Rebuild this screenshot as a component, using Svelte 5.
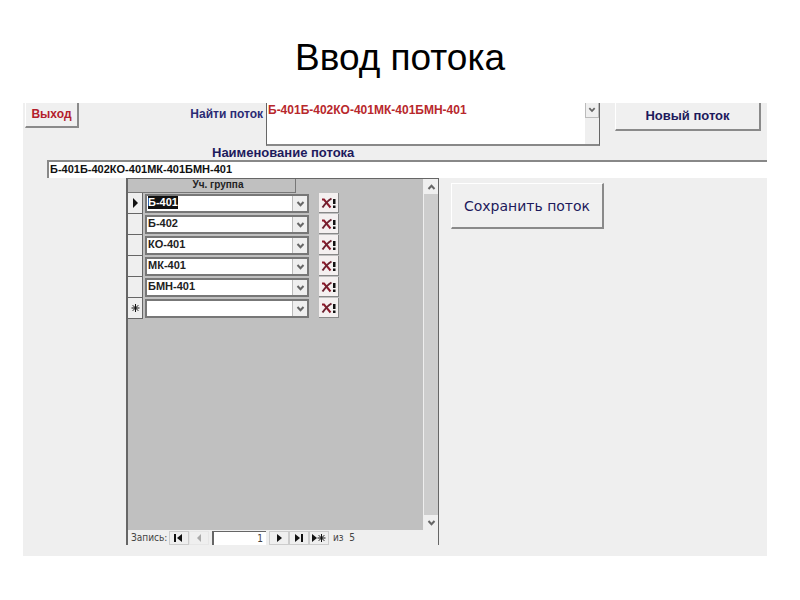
<script lang="ts">
	import { onMount } from 'svelte';

	const streams = ['Б-401Б-402КО-401МК-401БМН-401'];
	const groups = ['Б-401', 'Б-402', 'КО-401', 'МК-401', 'БМН-401'];

	let rows = $state(['Б-401', 'Б-402', 'КО-401', 'МК-401', 'БМН-401', '']);
	let current = $state(0);
	let streamName = $state(streams[0]);
	let editor: HTMLInputElement | undefined = $state();

	// The current record opens with its value selected
	onMount(() => {
		editor?.focus();
		editor?.select();
	});

	function clearRow(i: number) {
		rows[i] = '';
	}
</script>

{#snippet chevron(up = false)}
	<svg class="chevron" viewBox="0 0 9 6" aria-hidden="true">
		<path d={up ? 'M1.5 5 4.5 1.8 7.5 5' : 'M1.5 1 4.5 4.2 7.5 1'} />
	</svg>
{/snippet}

{#snippet star()}
	<path class="line" d="M4.5 1v8M.5 5h8M1.7 2.2l5.6 5.6M7.3 2.2 1.7 7.8" />
{/snippet}

<main class="slide">
	<h1>Ввод потока</h1>

	<section class="form">
		<div class="top">
			<button class="raised exit">Выход</button>
			<label class="find-label" for="find">Найти поток</label>
			<div class="find">
				<select id="find">
					{#each streams as s}
						<option>{s}</option>
					{/each}
				</select>
				<span class="drop">{@render chevron()}</span>
			</div>
			<button class="raised new">Новый поток</button>
		</div>

		<label class="name-label" for="name">Наименование потока</label>
		<div class="name-row">
			<input id="name" bind:value={streamName} />
		</div>

		<div class="body">
			<div class="subform">
				<div class="main">
					<div class="records">
						<div class="head">Уч. группа</div>
						{#each rows as row, i}
							<div class="record">
								<button class="marker" aria-label="Запись {i + 1}" onclick={() => (current = i)}>
									{#if i === current}
										<svg viewBox="0 0 9 10"><path d="M2 0v10l5-5z" /></svg>
									{:else if i === rows.length - 1}
										<svg viewBox="0 0 9 10">{@render star()}</svg>
									{/if}
								</button>
								<div class="combo">
									{#if i === current}
										<input aria-label="Уч. группа" bind:this={editor} bind:value={rows[i]} />
									{:else}
										<select aria-label="Уч. группа" bind:value={rows[i]}>
											<option value=""></option>
											{#each groups as g}
												<option>{g}</option>
											{/each}
										</select>
									{/if}
									<span class="arrow">{@render chevron()}</span>
								</div>
								<button class="delete" aria-label="Удалить" onclick={() => clearRow(i)}>
									<svg viewBox="0 0 15 12">
										<path class="cross" d="M1 2.5h2l6.500 8" />
										<path class="cross thin" d="M10.500 1.500C7 3.500 4 7 1.500 10.500" />
										<path d="M12 2h2.500v5h-2.500zM12 8.500h2.500v2.500h-2.500z" />
									</svg>
								</button>
							</div>
						{/each}
					</div>
					<div class="scroll">
						<button aria-label="Вверх">{@render chevron(true)}</button>
						<div class="track"></div>
						<button aria-label="Вниз">{@render chevron()}</button>
					</div>
				</div>

				<div class="nav">
					<label for="rec">Запись:</label>
					<button aria-label="Первая">
						<svg viewBox="0 0 14 10"><path d="M2 1h2v8H2zM10 1v8L5 5z" /></svg>
					</button>
					<button class="off" aria-label="Предыдущая" disabled>
						<svg viewBox="0 0 14 10"><path d="M9 1v8L5 5z" /></svg>
					</button>
					<input id="rec" value={current + 1} />
					<button aria-label="Следующая">
						<svg viewBox="0 0 14 10"><path d="M5 1v8l5-4z" /></svg>
					</button>
					<button aria-label="Последняя">
						<svg viewBox="0 0 14 10"><path d="M3 1v8l5-4zM9 1h2v8H9z" /></svg>
					</button>
					<button aria-label="Новая">
						<svg viewBox="0 0 14 10">
							<path d="M0 1v8l5-4z" />
							<g transform="translate(5 0)">{@render star()}</g>
						</svg>
					</button>
					<span>из&nbsp; {rows.length - 1}</span>
				</div>
			</div>

			<button class="raised save">Сохранить поток</button>
		</div>
	</section>
</main>

<style>
	:global(body) {
		margin: 0;
		background: #fff;
	}

	.slide {
		padding: 35px 33px 44px 23px;
		font-family: 'Liberation Sans', Arial, sans-serif;
	}

	h1 {
		margin: 0 0 22px 10px;
		font-size: 37px;
		line-height: 46px;
		font-weight: 400;
		text-align: center;
		color: #000;
	}

	button,
	input,
	select {
		box-sizing: border-box;
		margin: 0;
		padding: 0;
		border: 0;
		border-radius: 0;
		outline: 0;
		background: none;
		font: inherit;
		color: inherit;
		appearance: none;
	}

	svg {
		display: block;
		fill: #111;
	}

	.chevron {
		width: 9px;
		height: 6px;
		fill: none;
		stroke: #666;
		stroke-width: 2;
	}

	.line {
		fill: none;
		stroke: #111;
		stroke-width: 1;
	}

	.form {
		background: #efefef;
		color: #1d1a5c;
		font-size: 12px;
		font-weight: 700;
	}

	.top {
		display: flex;
		align-items: flex-start;
		height: 43px;
		padding: 0 6px 0 2px;
	}

	.raised {
		background: #f0f0f0;
		border-right: 2px solid #8a8a8a;
		border-bottom: 2px solid #8a8a8a;
		border-left: 1px solid #fff;
	}

	.exit {
		width: 54px;
		height: 25px;
		padding-bottom: 2px;
		color: #b3202c;
		font-size: 12px;
	}

	.find-label {
		margin-left: auto;
		padding-right: 3px;
		font-size: 12px;
		line-height: 22px;
		color: #2b2b74;
	}

	.find {
		display: flex;
		width: 334px;
		height: 43px;
		box-sizing: border-box;
		background: #fff;
		border: 1px solid #666;
		border-top: 0;
		border-bottom: 2px solid #888;
	}

	.find select {
		flex: 1;
		min-width: 0;
		height: 14px;
		padding-left: 1px;
		font-size: 12px;
		line-height: 14px;
		color: #b8282c;
	}

	.drop {
		width: 14px;
		background: #efefef;
	}

	.drop .chevron {
		padding: 4px 2px;
		border: 1px solid #bbb;
		border-top: 0;
		box-sizing: border-box;
		width: 14px;
		height: 15px;
	}

	.new {
		width: 146px;
		height: 28px;
		margin-left: 15px;
		padding-bottom: 2px;
		font-size: 13px;
	}

	.name-label {
		display: block;
		height: 14px;
		padding-left: 189px;
		font-size: 13px;
		line-height: 14px;
	}

	.name-row {
		display: flex;
		margin-left: 24px;
		background: #fff;
	}

	.name-row input {
		flex: 1;
		height: 18px;
		padding: 0 0 2px 1px;
		border-top: 2px solid #888;
		border-left: 2px solid #888;
		font-size: 11px;
		color: #111;
	}

	.body {
		display: flex;
		align-items: flex-start;
		gap: 12px;
		padding: 0 0 11px 103px;
	}

	.subform {
		width: 313px;
		border: solid #666;
		border-width: 1px 1px 0 2px;
		box-sizing: border-box;
		font-size: 11px;
		color: #222;
	}

	.main {
		display: flex;
		height: 351px;
	}

	.records {
		flex: 1;
		background: #c0c0c0;
	}

	.head {
		margin-right: 127px;
		height: 13px;
		padding-left: 13px;
		border-right: 1px solid #777;
		border-bottom: 1px solid #777;
		font-size: 10px;
		line-height: 12px;
		text-align: center;
	}

	.record {
		display: flex;
		height: 21px;
	}

	.marker {
		display: flex;
		justify-content: center;
		align-items: center;
		width: 15px;
		background: #efefef;
		border-right: 1px solid #666;
		border-bottom: 1px solid #666;
	}

	.marker svg {
		width: 9px;
		height: 10px;
	}

	.combo {
		display: flex;
		width: 164px;
		height: 19px;
		box-sizing: border-box;
		margin: 1px 0 0 2px;
		border: 2px solid #777;
		background: #fff;
	}

	.combo input,
	.combo select {
		flex: 1;
		min-width: 0;
		padding: 0 0 2px 1px;
		line-height: 13px;
	}

	.combo input::selection {
		background: #111;
		color: #fff;
	}

	.arrow {
		display: flex;
		align-items: center;
		justify-content: center;
		width: 14px;
		background: #efefef;
		border-left: 1px solid #bbb;
	}

	.delete {
		width: 20px;
		height: 20px;
		margin-left: 10px;
		padding: 0 2px;
		background: #f4f0f0;
		border-right: 1px solid #888;
		border-bottom: 1px solid #888;
	}

	.delete svg {
		width: 15px;
		height: 12px;
	}

	.cross {
		fill: none;
		stroke: #8b1a2b;
		stroke-width: 2;
	}

	.thin {
		stroke: #6b2230;
	}

	.scroll {
		display: flex;
		flex-direction: column;
		width: 14px;
		border-left: 1px solid #eee;
	}

	.scroll button {
		display: flex;
		align-items: center;
		justify-content: center;
		height: 15px;
		background: #efefef;
	}

	.track {
		flex: 1;
		background: #cdcdcd;
	}

	.nav {
		display: flex;
		align-items: center;
		height: 15px;
		padding-left: 3px;
		font: 10px 'DejaVu Sans Condensed', 'DejaVu Sans', sans-serif;
		color: #444;
	}

	.nav label {
		width: 38px;
	}

	.nav button {
		display: flex;
		align-items: center;
		justify-content: center;
		width: 20px;
		height: 14px;
		box-sizing: border-box;
		border: 1px solid #ccc;
	}

	.nav svg {
		width: 14px;
		height: 10px;
	}

	.nav .off {
		border-color: #e6e6e6;
	}

	.nav .off svg {
		fill: #aaa;
	}

	.nav input {
		width: 54px;
		height: 14px;
		margin: 0 3px;
		padding-right: 3px;
		border-top: 1px solid #666;
		border-left: 2px solid #666;
		background: #fff;
		text-align: right;
	}

	.nav span {
		margin-left: 4px;
	}

	.save {
		width: 153px;
		height: 46px;
		margin-top: 5px;
		border-top: 1px solid #fff;
		font: 14px 'DejaVu Sans', sans-serif;
	}
</style>
